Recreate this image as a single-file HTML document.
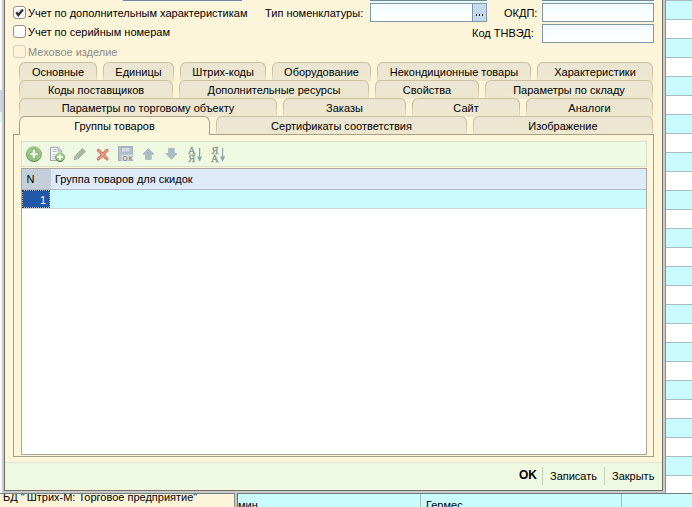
<!DOCTYPE html>
<html><head><meta charset="utf-8">
<style>
*{box-sizing:border-box;margin:0;padding:0}
html,body{width:692px;height:507px;overflow:hidden;background:#fff;font-family:"Liberation Sans",sans-serif;font-size:11px;color:#000}
.a{position:absolute}
.t{position:absolute;white-space:nowrap;line-height:13px}
/* background grid right */
#bgr{left:666px;top:0;width:26px;height:507px;background:repeating-linear-gradient(to bottom,#a9bcc0 0,#a9bcc0 1px,#c9fafd 1px,#c9fafd 19px,#a9bcc0 19px,#a9bcc0 20px,#fff 20px,#fff 38px)}
#status{left:0;top:494px;width:234px;height:13px;background:#fdf5da;overflow:hidden}
#botgrid{left:238px;top:494px;width:454px;height:13px;background:#c9fcfd}
#dlg{left:2px;top:-10px;width:663px;height:503px;background:#fdf5da;border-left:2px solid #c9c9c9;border-right:2px solid #c9c9c9;border-bottom:2px solid #c9c9c9}
#dlgin{left:0;top:0;right:0;bottom:0;border-left:1px solid #6f6f6a;border-right:1px solid #6f6f6a;border-bottom:1px solid #6f6f6a}
.cb{position:absolute;width:13px;height:13px;border:1px solid #97937f;border-radius:3px;background:linear-gradient(#fff,#f4f7fa)}
.fld{position:absolute;border:1px solid #7e98a8;background:linear-gradient(#f2fbff,#fff)}
.tab{position:absolute;height:19px;border:1px solid #c9c1a0;border-bottom:none;border-radius:6px 6px 0 0;background:linear-gradient(#ebe6d3,#eee8cf);text-align:center;line-height:17px;white-space:nowrap}
.tab span{position:relative;top:1px}
.tab::before,.tab::after{content:"";position:absolute;bottom:0;width:1px;height:9px;background:linear-gradient(rgba(236,231,208,0),#ebe5cc)}
.tab::before{left:-1px}.tab::after{right:-1px}
.act::before,.act::after{display:none}
</style></head><body>
<div id="bgr" class="a"></div>
<div class="a" style="left:665px;top:0;width:1px;height:507px;background:#7d9595"></div>
<div id="botgrid" class="a"></div>
<div class="a" style="left:0;top:493px;width:692px;height:1px;background:#6f8080"></div>
<div id="status" class="a"><div class="t" style="left:3px;top:-3px">БД "<span style="margin-left:2px">Штрих-М: Торговое предприятие"</span></div></div>
<div class="a" style="left:234px;top:493px;width:1px;height:14px;background:#8a8a8a"></div>
<div class="a" style="left:235px;top:493px;width:2px;height:14px;background:#c8c8c8"></div>
<div class="a" style="left:237px;top:493px;width:1px;height:14px;background:#6a7070"></div>
<div class="a" style="left:420px;top:494px;width:1px;height:13px;background:#a9bcc0"></div>
<div class="a" style="left:621px;top:494px;width:1px;height:13px;background:#a9bcc0"></div>
<div class="t" style="left:238px;top:499px">мин</div>
<div class="t" style="left:426px;top:499px">Гермес</div>
<div class="a" style="left:0;top:0;width:2px;height:493px;background:#fafafa"></div>
<div class="a" style="left:0;top:90px;width:2px;height:22px;background:#cdd4de"></div>
<div class="a" style="left:0;top:112px;width:2px;height:10px;background:#e2f6f8"></div>

<div id="dlg" class="a"><div id="dlgin" class="a"></div></div>

<!-- top field bars -->
<div class="a" style="left:123px;top:0;width:119px;height:1px;background:#758890"></div>
<div class="a" style="left:370px;top:0;width:117px;height:1px;background:#758890"></div>
<div class="a" style="left:370px;top:1px;width:117px;height:2px;background:#e4f8fa"></div>
<div class="a" style="left:542px;top:0;width:112px;height:1px;background:#758890"></div>
<div class="a" style="left:542px;top:1px;width:112px;height:2px;background:#e4f8fa"></div>
<div class="a" style="left:123px;top:1px;width:119px;height:1px;background:#f4fbf4"></div>

<!-- checkboxes -->
<div class="cb" style="left:13px;top:6px"></div>
<svg class="a" style="left:13px;top:6px" width="13" height="13"><path d="M3.3 6.3 L5.3 9 L9.9 3.4" fill="none" stroke="#333" stroke-width="2.4"/></svg>
<div class="t" style="left:28px;top:7px">Учет по дополнительным характеристикам</div>
<div class="cb" style="left:13px;top:25px"></div>
<div class="t" style="left:28px;top:26px">Учет по серийным номерам</div>
<div class="cb" style="left:13px;top:45px;border-color:#d6d1bf;background:transparent;border-radius:3px"></div>
<div class="t" style="left:28px;top:46px;color:#8e8b84">Меховое изделие</div>

<div class="t" style="left:265px;top:7px">Тип номенклатуры:</div>
<div class="fld" style="left:370px;top:3px;width:117px;height:19px"></div>
<div class="a" style="left:472px;top:4px;width:14px;height:17px;background:#c6daef;border-left:1px solid #7e98a8"></div>
<div class="a" style="left:475.8px;top:14px;width:1.6px;height:2px;background:#111"></div>
<div class="a" style="left:478.7px;top:14px;width:1.6px;height:2px;background:#111"></div>
<div class="a" style="left:481.6px;top:14px;width:1.6px;height:2px;background:#111"></div>
<div class="t" style="left:504px;top:7px">ОКДП:</div>
<div class="fld" style="left:542px;top:3px;width:112px;height:19px"></div>
<div class="t" style="left:472px;top:27px">Код ТНВЭД:</div>
<div class="fld" style="left:542px;top:24px;width:112px;height:19px"></div>

<!-- tabs row 1 -->
<div class="tab" style="left:19px;top:62px;width:78px"><span>Основные</span></div>
<div class="tab" style="left:103px;top:62px;width:71px"><span>Единицы</span></div>
<div class="tab" style="left:180px;top:62px;width:86px"><span>Штрих-коды</span></div>
<div class="tab" style="left:272px;top:62px;width:99px"><span>Оборудование</span></div>
<div class="tab" style="left:377px;top:62px;width:154px"><span>Некондиционные товары</span></div>
<div class="tab" style="left:537px;top:62px;width:116px"><span>Характеристики</span></div>
<!-- row 2 -->
<div class="tab" style="left:19px;top:80px;width:154px"><span>Коды поставщиков</span></div>
<div class="tab" style="left:179px;top:80px;width:190px"><span>Дополнительные ресурсы</span></div>
<div class="tab" style="left:375px;top:80px;width:104px"><span>Свойства</span></div>
<div class="tab" style="left:485px;top:80px;width:168px"><span>Параметры по складу</span></div>
<!-- row 3 -->
<div class="tab" style="left:19px;top:98px;width:258px"><span>Параметры по торговому объекту</span></div>
<div class="tab" style="left:283px;top:98px;width:123px"><span>Заказы</span></div>
<div class="tab" style="left:412px;top:98px;width:108px"><span>Сайт</span></div>
<div class="tab" style="left:526px;top:98px;width:127px"><span>Аналоги</span></div>
<!-- row 4 -->
<div class="tab" style="left:216px;top:116px;width:251px"><span>Сертификаты соответствия</span></div>
<div class="tab" style="left:473px;top:116px;width:180px"><span>Изображение</span></div>

<!-- panel -->
<div class="a" style="left:13px;top:134px;width:641px;height:323px;border:1px solid #a8a084;background:#fdf5da"></div>
<div class="tab act" style="left:19px;top:116px;width:191px;height:19px;background:#fdf5da;border-color:#a8a084"><span>Группы товаров</span></div>
<div class="a" style="left:20px;top:134px;width:189px;height:1px;background:#fdf5da"></div>

<!-- toolbar -->
<div class="a" style="left:21px;top:141px;width:626px;height:26px;border:1px solid #d9e2c9;background:#eff9e1"></div>
<!-- table -->
<div class="a" style="left:21px;top:168px;width:626px;height:287px;border:1px solid #a9a79f;background:#fff"></div>
<div class="a" style="left:22px;top:169px;width:624px;height:20px;background:#dfeaf8"></div>
<div class="a" style="left:22px;top:169px;width:29px;height:20px;background:#c5cfdc"></div>
<div class="a" style="left:22px;top:189px;width:624px;height:1px;background:#b3bcc6"></div>
<div class="t" style="left:26.5px;top:173px">N</div>
<div class="t" style="left:55px;top:173px">Группа товаров для скидок</div>
<div class="a" style="left:22px;top:190px;width:624px;height:18px;background:#c9fbff"></div>
<div class="a" style="left:22px;top:208px;width:624px;height:1px;background:#d0d6da"></div>
<div class="a" style="left:22px;top:190px;width:28px;height:18px;background:#aebfd6"></div>
<div class="a" style="left:22px;top:190px;width:28px;height:18px;background:#2157a7;background-clip:padding-box;border:1px dotted #24304a"></div>
<div class="t" style="left:40px;top:194px;color:#fff">1</div>


<!-- toolbar icons -->
<svg class="a" style="left:0;top:0" width="692" height="507" viewBox="0 0 692 507">
<defs>
<radialGradient id="gg" cx="0.4" cy="0.45" r="0.65"><stop offset="0" stop-color="#a6d48c"/><stop offset="0.6" stop-color="#94c47c"/><stop offset="1" stop-color="#b2cda2"/></radialGradient><linearGradient id="gs" x1="0" y1="0" x2="0" y2="1"><stop offset="0" stop-color="#b8cfa8"/><stop offset="1" stop-color="#4f7042"/></linearGradient>
</defs>
<circle cx="33.9" cy="154" r="7.5" fill="url(#gg)" stroke="url(#gs)" stroke-width="1"/>
<path d="M32.3 149.3h3.3v3.2h2.6v2.9h-2.6v3h-3.3v-3h-2.5v-2.9h2.5z" fill="#f2fbe9" stroke="#5f8a4d" stroke-width="0.5"/>
<path d="M50.5 147.3h7.6l3.4 3.6v9.5h-11z" fill="#fafcff" stroke="#98a29c" stroke-width="1"/>
<path d="M58 147.3v3.8h3.5" fill="#dfe6e8" stroke="#8e9a92" stroke-width="0.8"/>
<path d="M52.3 149.5h4.5M52.3 151.5h4.5M52.3 154.3h3M52.3 156.4h3M52.3 158.4h3" stroke="#aebccb" stroke-width="1"/>
<circle cx="60" cy="157.1" r="4.5" fill="url(#gg)" stroke="url(#gs)" stroke-width="1"/>
<path d="M59 154.2h2v1.9h1.9v2h-1.9v1.9h-2v-1.9h-1.9v-2h1.9z" fill="#eef8e6"/>
<path d="M74 159.8l1.2-4.2 7.3-7.3 3.1 3.1-7.3 7.3z" fill="#a9b7a1" stroke="#98a690" stroke-width="0.6"/>
<path d="M75.4 155.4l3 3" stroke="#c5cfbf" stroke-width="0.8"/>
<path d="M98.4 150.3l8.6 8.6M107 150.3l-8.6 8.6" stroke="#c06450" stroke-width="3" stroke-linecap="round"/>
<path d="M98.4 150.3l8.6 8.6M107 150.3l-8.6 8.6" stroke="#ee9c86" stroke-width="1.6" stroke-linecap="round"/>
<rect x="118.5" y="146.5" width="14" height="14" fill="#b5c0c8" stroke="#a6b2ba" stroke-width="1"/>
<rect x="121.5" y="147.5" width="8.5" height="4.5" fill="#d3dade" stroke="#a9b4bb" stroke-width="0.8"/>
<rect x="121.5" y="154.8" width="11.5" height="6" fill="#dfe5e8"/>
<text x="122.3" y="160.6" font-family="Liberation Sans" font-size="7" font-weight="bold" fill="#7f8a92" textLength="10.5">ОК</text>
<path d="M148.4 148.6l5.6 5.6h-2.8v5.2h-5.6v-5.2h-2.8z" fill="#afbbc3" stroke="#afbbc3" stroke-width="1" stroke-linejoin="round"/>
<path d="M171.4 159.2l5.6-5.6h-2.8v-5.2h-5.6v5.2h-2.8z" fill="#afbbc3" stroke="#afbbc3" stroke-width="1" stroke-linejoin="round"/>
<g font-family="Liberation Serif" font-size="10.5" fill="#8e9b8e" stroke="#8e9b8e" stroke-width="0.35">
<text x="188" y="153.6">A</text><text x="188.3" y="161.8">Я</text>
<text x="211.4" y="153.6">Я</text><text x="211" y="161.8">A</text>
</g>
<path d="M199.6 148v9" stroke="#8fa1aa" stroke-width="1.2"/><path d="M197.1 156.5h5l-2.5 5.3z" fill="#8fa1aa"/>
<path d="M222.6 148v9" stroke="#8fa1aa" stroke-width="1.2"/><path d="M220.1 156.5h5l-2.5 5.3z" fill="#8fa1aa"/>
</svg>

<!-- footer -->
<div class="a" style="left:5px;top:462px;width:657px;height:1px;background:#dfe6d0"></div>
<div class="a" style="left:5px;top:463px;width:657px;height:26px;background:#eff9e1"></div>
<div class="a" style="left:5px;top:489px;width:657px;height:1px;background:#fbf6df"></div>
<div class="t" style="left:519px;top:469px;font-weight:bold;font-size:12px">OK</div>
<div class="a" style="left:542px;top:467px;width:1px;height:18px;background:#c8cfbb"></div>
<div class="t" style="left:550px;top:470px">Записать</div>
<div class="a" style="left:604px;top:467px;width:1px;height:18px;background:#c8cfbb"></div>
<div class="t" style="left:612px;top:470px">Закрыть</div>

</body></html>
